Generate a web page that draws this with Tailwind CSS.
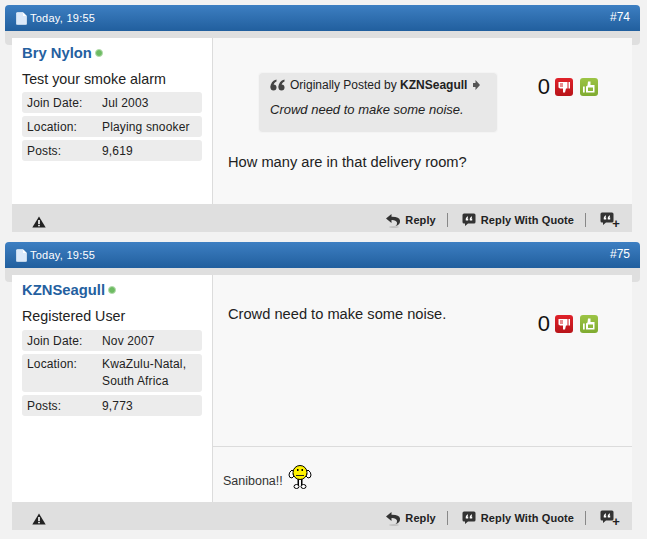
<!DOCTYPE html>
<html lang="en">
<head>
  <meta charset="UTF-8" />
  <title>Thread</title>
  <script src="https://cdn.jsdelivr.net/npm/@tailwindcss/browser@4"></script>
</head>
<body class="bg-[#f2f2f2] font-['Liberation_Sans',Arial,sans-serif] text-[#222] w-[647px] h-[539px] overflow-hidden">

  <!-- icons -->
  <svg class="hidden">
    <symbol id="doc" viewBox="0 0 11 13"><path d="M.5 1.200Q.5.5 1.200.5H7L10.500 4V12Q10.500 12.600 9.800 12.600H1.200Q.5 12.600 .5 12Z" fill="#dbe9fa" stroke="#f4f8fd" stroke-width=".6"/><path d="M7 .5V4H10.500Z" fill="#fff"/></symbol>
    <symbol id="warn" viewBox="0 0 14 12"><path d="M7 .5 13.700 11.500H.3Z" fill="#222"/><rect x="6.200" y="4" width="1.600" height="4" fill="#fff"/><rect x="6.200" y="8.800" width="1.600" height="1.500" fill="#fff"/></symbol>
    <symbol id="reply" viewBox="0 0 16 15"><path d="M6.500 1 1 5.500 6.500 10V7Q11 6.800 12 9.500 12.500 11.500 10.500 13 15.500 11.800 15 7.500 14.300 3.600 6.500 3.800Z" fill="#333"/><ellipse cx="9" cy="14" rx="5" ry=".8" fill="#bbb"/></symbol>
    <symbol id="quote" viewBox="0 0 14 14"><path d="M2 .5H12Q13.500 .5 13.500 2V9Q13.500 10.500 12 10.500H6L3 13V10.500H2Q.5 10.500 .5 9V2Q.5 .5 2 .5Z" fill="#333"/><path d="M3.800 7.500Q3.200 4.500 6 3.300V4.500Q5.300 4.900 5.300 5.500H6.200V7.500ZM7.800 7.500Q7.200 4.500 10 3.300V4.500Q9.300 4.900 9.300 5.500H10.200V7.500Z" fill="#fff"/></symbol>
    <symbol id="marks" viewBox="0 0 15 12"><g fill="#444"><circle cx="3.500" cy="8.500" r="3"/><path d="M.5 8.500Q.5 2 6.500 .5V2.500Q3.500 3.500 3.500 7Z"/><circle cx="11.500" cy="8.500" r="3"/><path d="M8.500 8.500Q8.500 2 14.500 .5V2.500Q11.500 3.500 11.500 7Z"/></g></symbol>
    <symbol id="down" viewBox="0 0 18 18"><path d="M3.500 4H12.500V10.500H11L10 14.500H8V10.500H5L3.500 9.500Z" fill="#fff"/><path d="M5 6H8M5 8H8" stroke="#cf1a20"/><rect x="13.500" y="4" width="1.500" height="6.500" fill="#fff"/></symbol>
    <symbol id="up" viewBox="0 0 18 18"><path d="M14.500 14.500H6V8.500L7.500 7.500 8 3.500H10.500V7H14.500Z" fill="#fff"/><path d="M8 9.500H13V13H8Z" fill="#8db83a"/><rect x="3" y="8.500" width="1.700" height="6" fill="#fff"/></symbol>
    <symbol id="smiley" viewBox="0 0 24 24">
      <path d="M4 5Q1 7 1 10T4 13L6 11Q4 9 6 7ZM20 5Q23 7 23 10T20 13L18 11Q20 9 18 7Z" fill="#fff" stroke="#000"/>
      <rect x="9.500" y="14" width="1.500" height="6" fill="#000"/><rect x="13" y="14" width="1.500" height="6" fill="#000"/>
      <ellipse cx="8.500" cy="21.500" rx="2.500" ry="2" fill="#fff" stroke="#000"/>
      <ellipse cx="15.500" cy="21.500" rx="2.500" ry="2" fill="#fff" stroke="#000"/>
      <circle cx="12" cy="7.500" r="7" fill="#fff200" stroke="#000"/>
      <rect x="9" y="4" width="1.500" height="2" fill="#000"/><rect x="13.500" y="4" width="1.500" height="2" fill="#000"/>
      <path d="M8 10.500H16" stroke="#222" fill="none"/>
    </symbol>
  </svg>

  <div class="pt-[5px] pl-[5px] w-[640px]">

    <!-- post 74 -->
    <div class="mb-[10px]">
      <div class="h-[26px] rounded-t-[4px] bg-gradient-to-b from-[#3d7fc2] to-[#215f9e] flex items-start justify-between text-white text-[11px] pl-[11px] pr-[10px]">
        <div class="flex items-center h-[26px] gap-[3px] tracking-[.25px]"><svg class="w-[11px] h-[13px]"><use href="#doc"/></svg><span>Today, 19:55</span></div>
        <span class="text-[12px] mt-[3px]">#74</span>
      </div>
      <div class="h-[14px] bg-[#dfdfdf] rounded-b-[4px]"></div>
      <div class="relative ml-[7px] mr-[8px] -mt-[7px]">
        <div class="flex h-[166px]">
          <div class="w-[201px] shrink-0 bg-white border-r border-[#dcdcdc] px-[10px]">
            <div class="flex items-center h-[30px] gap-[3px]"><a class="text-[14.800px] font-bold text-[#24609f]">Bry Nylon</a><span class="w-[8px] h-[8px] rounded-full bg-[#6dbb62] border border-[#b5dcae]"></span></div>
            <div class="text-[14.300px] leading-[22px] mb-[2px]">Test your smoke alarm</div>
            <div class="flex flex-col gap-[3px] text-[12px] tracking-[.15px]">
              <div class="flex bg-[#ececec] rounded-[3px] h-[21px] items-center pt-[1px] px-[5px]"><span class="w-[75px]">Join Date:</span><span>Jul 2003</span></div>
              <div class="flex bg-[#ececec] rounded-[3px] h-[21px] items-center pt-[1px] px-[5px]"><span class="w-[75px]">Location:</span><span>Playing snooker</span></div>
              <div class="flex bg-[#ececec] rounded-[3px] h-[21px] items-center pt-[1px] px-[5px]"><span class="w-[75px]">Posts:</span><span>9,619</span></div>
            </div>
          </div>
          <div class="flex-1 bg-[#f8f8f8] flex justify-between pl-[15px] pr-[34px]">
            <div>
              <div class="ml-[31px] mt-[35px] w-[238px] h-[59px] bg-[#e8e8e8] outline outline-[#f4f4f4] rounded-[3px] px-[11px]">
                <div class="flex items-center h-[24px] text-[12px]">
                  <svg class="w-[15px] h-[12px] mr-[5px]"><use href="#marks"/></svg>
                  <span>Originally Posted by <b>KZNSeagull</b></span>
                  <svg class="w-[8px] h-[10px] ml-[5px]" viewBox="0 0 8 10"><path d="M1 3H3.500V0L8 5 3.500 10V7H1Z" fill="#555"/></svg>
                </div>
                <div class="italic text-[13px] leading-[15px] mt-[5px]">Crowd need to make some noise.</div>
              </div>
              <div class="text-[14.670px] leading-[18px] mt-[21px]">How many are in that delivery room?</div>
            </div>
            <div class="flex items-center h-[18px] mt-[40px]">
              <span class="text-[22px] leading-none text-[#111] mr-[5px]">0</span>
              <span class="w-[18px] h-[18px] mr-[7px] rounded-[3px] bg-gradient-to-b from-[#e0222a] to-[#b81419]"><svg class="w-[18px] h-[18px]"><use href="#down"/></svg></span>
              <span class="w-[18px] h-[18px] rounded-[3px] bg-gradient-to-b from-[#9cc445] to-[#7fab30]"><svg class="w-[18px] h-[18px]"><use href="#up"/></svg></span>
            </div>
          </div>
        </div>
        <div class="h-[28px] bg-[#dfdfdf] flex items-center text-[11px] font-bold tracking-[.1px] pl-[20px] pr-[12px]">
          <svg class="w-[14px] h-[12px] mt-[7px]"><use href="#warn"/></svg>
          <div class="ml-auto flex items-center mt-[4px]">
            <svg class="w-[16px] h-[15px] mr-[4px]"><use href="#reply"/></svg><span>Reply</span>
            <span class="w-px h-[14px] bg-[#888] mx-[11px]"></span>
            <svg class="w-[14px] h-[14px] ml-[3px] mr-[5px]"><use href="#quote"/></svg><span>Reply With Quote</span>
            <span class="w-px h-[14px] bg-[#888] mx-[11px]"></span>
            <span class="relative w-[20px] h-[16px] ml-[3px] text-[#222]"><svg class="w-[14px] h-[14px]"><use href="#quote"/></svg><span class="absolute right-0 bottom-[-2px] text-[13px] leading-none">+</span></span>
          </div>
        </div>
      </div>
    </div>

    <!-- post 75 -->
    <div>
      <div class="h-[26px] rounded-t-[4px] bg-gradient-to-b from-[#3d7fc2] to-[#215f9e] flex items-start justify-between text-white text-[11px] pl-[11px] pr-[10px]">
        <div class="flex items-center h-[26px] gap-[3px] tracking-[.25px]"><svg class="w-[11px] h-[13px]"><use href="#doc"/></svg><span>Today, 19:55</span></div>
        <span class="text-[12px] mt-[3px]">#75</span>
      </div>
      <div class="h-[14px] bg-[#dfdfdf] rounded-b-[4px]"></div>
      <div class="relative ml-[7px] mr-[8px] -mt-[7px]">
        <div class="flex h-[227px]">
          <div class="w-[201px] shrink-0 bg-white border-r border-[#dcdcdc] px-[10px]">
            <div class="flex items-center h-[30px] gap-[3px]"><a class="text-[14.800px] font-bold text-[#24609f]">KZNSeagull</a><span class="w-[8px] h-[8px] rounded-full bg-[#6dbb62] border border-[#b5dcae]"></span></div>
            <div class="text-[14.300px] leading-[22px] mb-[3px]">Registered User</div>
            <div class="flex flex-col gap-[3px] text-[12px] tracking-[.15px]">
              <div class="flex bg-[#ececec] rounded-[3px] h-[21px] items-center px-[5px]"><span class="w-[75px]">Join Date:</span><span>Nov 2007</span></div>
              <div class="flex bg-[#ececec] rounded-[3px] h-[38px] pt-[2px] leading-[17px] px-[5px]"><span class="w-[75px]">Location:</span><span>KwaZulu-Natal,<br>South Africa</span></div>
              <div class="flex bg-[#ececec] rounded-[3px] h-[21px] items-center px-[5px]"><span class="w-[75px]">Posts:</span><span>9,773</span></div>
            </div>
          </div>
          <div class="flex-1 bg-[#f8f8f8] flex flex-col">
            <div class="flex-1 flex justify-between pl-[15px] pr-[34px]">
              <div class="text-[14.670px] leading-[18px] mt-[30px]">Crowd need to make some noise.</div>
              <div class="flex items-center h-[18px] mt-[40px]">
                <span class="text-[22px] leading-none text-[#111] mr-[5px]">0</span>
                <span class="w-[18px] h-[18px] mr-[7px] rounded-[3px] bg-gradient-to-b from-[#e0222a] to-[#b81419]"><svg class="w-[18px] h-[18px]"><use href="#down"/></svg></span>
                <span class="w-[18px] h-[18px] rounded-[3px] bg-gradient-to-b from-[#9cc445] to-[#7fab30]"><svg class="w-[18px] h-[18px]"><use href="#up"/></svg></span>
              </div>
            </div>
            <div class="h-[56px] border-t border-[#dcdcdc] flex items-end pl-[10px] pb-[13px] text-[12.500px] text-[#333]">
              <span class="-mb-[2px]">Sanibona!!</span>
              <svg class="w-[24px] h-[24px] ml-[5px]"><use href="#smiley"/></svg>
            </div>
          </div>
        </div>
        <div class="h-[28px] bg-[#dfdfdf] flex items-center text-[11px] font-bold tracking-[.1px] pl-[20px] pr-[12px]">
          <svg class="w-[14px] h-[12px] mt-[6px]"><use href="#warn"/></svg>
          <div class="ml-auto flex items-center mt-[4px]">
            <svg class="w-[16px] h-[15px] mr-[4px]"><use href="#reply"/></svg><span>Reply</span>
            <span class="w-px h-[14px] bg-[#888] mx-[11px]"></span>
            <svg class="w-[14px] h-[14px] ml-[3px] mr-[5px]"><use href="#quote"/></svg><span>Reply With Quote</span>
            <span class="w-px h-[14px] bg-[#888] mx-[11px]"></span>
            <span class="relative w-[20px] h-[16px] ml-[3px] text-[#222]"><svg class="w-[14px] h-[14px]"><use href="#quote"/></svg><span class="absolute right-0 bottom-[-2px] text-[13px] leading-none">+</span></span>
          </div>
        </div>
      </div>
    </div>

  </div>
</body>
</html>
